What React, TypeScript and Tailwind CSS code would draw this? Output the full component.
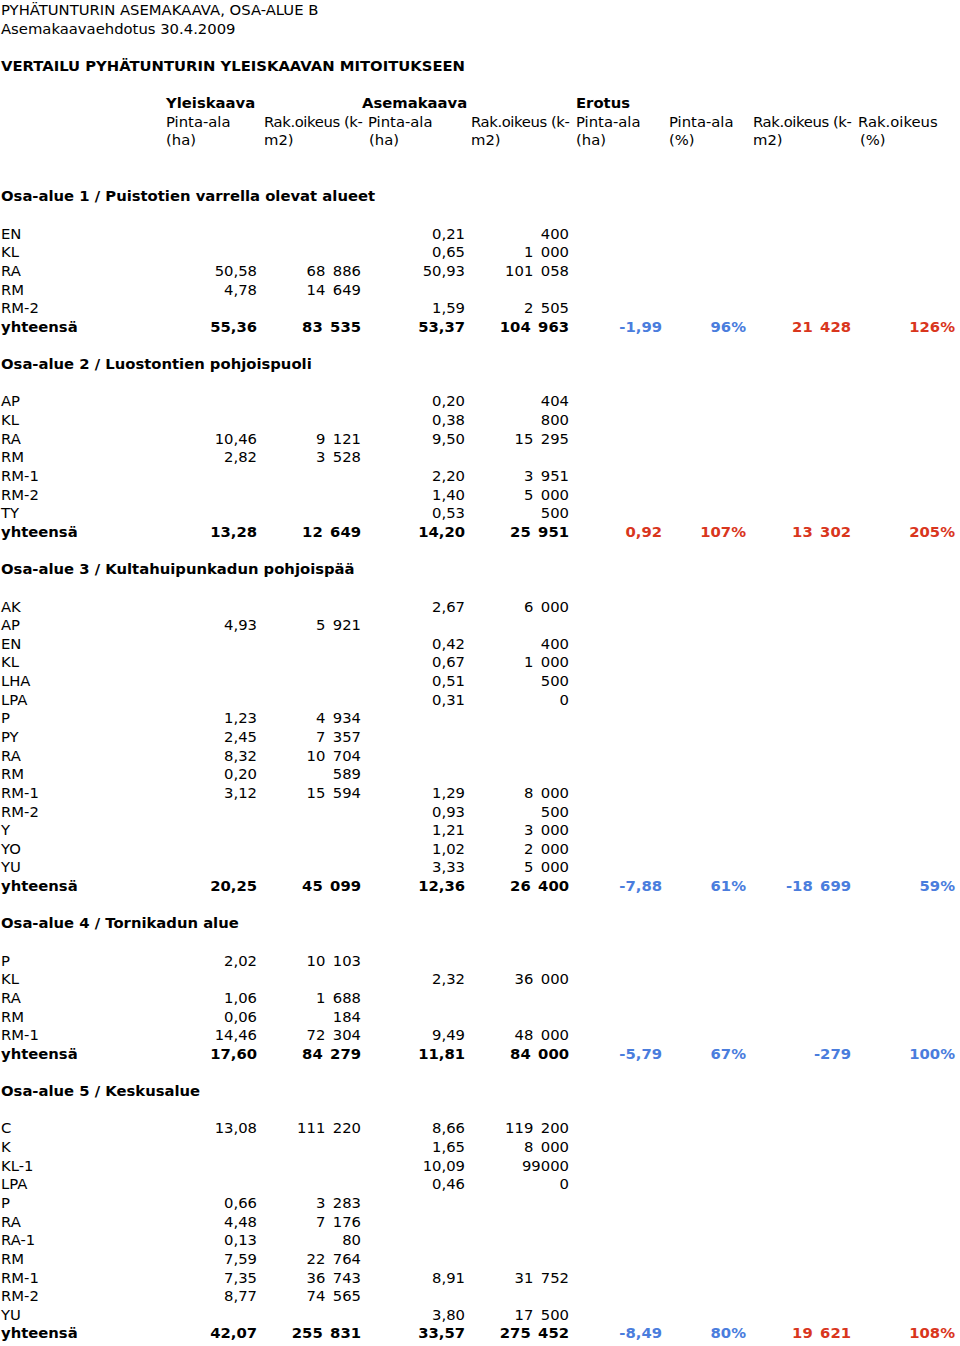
import React from "react";

type Tone = "blue" | "red";

interface ISection {
  title: string;
  rows: string[][];
  total: string[];
  diff: string[];
  tones: Tone[];
}

const sections: ISection[] = [
  {
    title: "Osa-alue 1 / Puistotien varrella olevat alueet",
    rows: [
      ["EN", "", "", "0,21", "400"],
      ["KL", "", "", "0,65", "1 000"],
      ["RA", "50,58", "68 886", "50,93", "101 058"],
      ["RM", "4,78", "14 649", "", ""],
      ["RM-2", "", "", "1,59", "2 505"],
    ],
    total: ["55,36", "83 535", "53,37", "104 963"],
    diff: ["-1,99", "96%", "21 428", "126%"],
    tones: ["blue", "blue", "red", "red"],
  },
  {
    title: "Osa-alue 2 / Luostontien pohjoispuoli",
    rows: [
      ["AP", "", "", "0,20", "404"],
      ["KL", "", "", "0,38", "800"],
      ["RA", "10,46", "9 121", "9,50", "15 295"],
      ["RM", "2,82", "3 528", "", ""],
      ["RM-1", "", "", "2,20", "3 951"],
      ["RM-2", "", "", "1,40", "5 000"],
      ["TY", "", "", "0,53", "500"],
    ],
    total: ["13,28", "12 649", "14,20", "25 951"],
    diff: ["0,92", "107%", "13 302", "205%"],
    tones: ["red", "red", "red", "red"],
  },
  {
    title: "Osa-alue 3 / Kultahuipunkadun pohjoispää",
    rows: [
      ["AK", "", "", "2,67", "6 000"],
      ["AP", "4,93", "5 921", "", ""],
      ["EN", "", "", "0,42", "400"],
      ["KL", "", "", "0,67", "1 000"],
      ["LHA", "", "", "0,51", "500"],
      ["LPA", "", "", "0,31", "0"],
      ["P", "1,23", "4 934", "", ""],
      ["PY", "2,45", "7 357", "", ""],
      ["RA", "8,32", "10 704", "", ""],
      ["RM", "0,20", "589", "", ""],
      ["RM-1", "3,12", "15 594", "1,29", "8 000"],
      ["RM-2", "", "", "0,93", "500"],
      ["Y", "", "", "1,21", "3 000"],
      ["YO", "", "", "1,02", "2 000"],
      ["YU", "", "", "3,33", "5 000"],
    ],
    total: ["20,25", "45 099", "12,36", "26 400"],
    diff: ["-7,88", "61%", "-18 699", "59%"],
    tones: ["blue", "blue", "blue", "blue"],
  },
  {
    title: "Osa-alue 4 / Tornikadun alue",
    rows: [
      ["P", "2,02", "10 103", "", ""],
      ["KL", "", "", "2,32", "36 000"],
      ["RA", "1,06", "1 688", "", ""],
      ["RM", "0,06", "184", "", ""],
      ["RM-1", "14,46", "72 304", "9,49", "48 000"],
    ],
    total: ["17,60", "84 279", "11,81", "84 000"],
    diff: ["-5,79", "67%", "-279", "100%"],
    tones: ["blue", "blue", "blue", "blue"],
  },
  {
    title: "Osa-alue 5 / Keskusalue",
    rows: [
      ["C", "13,08", "111 220", "8,66", "119 200"],
      ["K", "", "", "1,65", "8 000"],
      ["KL-1", "", "", "10,09", "99000"],
      ["LPA", "", "", "0,46", "0"],
      ["P", "0,66", "3 283", "", ""],
      ["RA", "4,48", "7 176", "", ""],
      ["RA-1", "0,13", "80", "", ""],
      ["RM", "7,59", "22 764", "", ""],
      ["RM-1", "7,35", "36 743", "8,91", "31 752"],
      ["RM-2", "8,77", "74 565", "", ""],
      ["YU", "", "", "3,80", "17 500"],
    ],
    total: ["42,07", "255 831", "33,57", "275 452"],
    diff: ["-8,49", "80%", "19 621", "108%"],
    tones: ["blue", "blue", "red", "red"],
  },
];

const grid =
  "grid h-[18.65px] grid-cols-[165px_97px_104px_104px_104px_93px_84px_105px_104px] items-center leading-[18.65px] whitespace-nowrap";

// thousands separator a bit wider than a normal space, as in the sheet
const num = (v: string) => v.replace(/ /g, "\u2002");

function Line({ children, bold }: { children?: React.ReactNode; bold?: boolean }) {
  return (
    <div className={`h-[18.65px] pl-[1px] leading-[18.65px] whitespace-nowrap ${bold ? "font-bold" : ""}`}>
      {children}
    </div>
  );
}

function DataRow({ cells, bold, diff, tones }: { cells: string[]; bold?: boolean; diff?: string[]; tones?: Tone[] }) {
  return (
    <div className={`${grid} ${bold ? "font-bold" : ""}`}>
      <div className="pl-[1px]">{cells[0]}</div>
      {cells.slice(1).map((c, i) => (
        <div key={i} className="pr-[5px] text-right">
          {num(c)}
        </div>
      ))}
      {[0, 1, 2, 3].map((i) => (
        <div
          key={`d${i}`}
          className={`pr-[5px] text-right ${tones?.[i] === "red" ? "text-[#d9361d]" : "text-[#4a7ddd]"}`}
        >
          {diff ? num(diff[i]) : ""}
        </div>
      ))}
    </div>
  );
}

export default function App() {
  return (
    <div className="w-[960px] bg-white text-[14.8px] text-black [font-family:'DejaVu_Sans',Verdana,sans-serif]">
      <div className="mt-[1px]">
        <Line>PYHÄTUNTURIN ASEMAKAAVA, OSA-ALUE B</Line>
        <Line>Asemakaavaehdotus 30.4.2009</Line>
        <Line />
        <Line bold>VERTAILU PYHÄTUNTURIN YLEISKAAVAN MITOITUKSEEN</Line>
        <Line />

        <div className={`${grid} font-bold`}>
          <div />
          <div className="pl-[1px]">Yleiskaava</div>
          <div />
          <div className="-ml-[4px]">Asemakaava</div>
          <div />
          <div className="pl-[2px]">Erotus</div>
        </div>
        <div className={grid}>
          <div />
          <div className="pl-[1px]">Pinta-ala</div>
          <div className="pl-[2px] tracking-[-0.4px]">Rak.oikeus (k-</div>
          <div className="pl-[2px]">Pinta-ala</div>
          <div className="pl-[1px] tracking-[-0.4px]">Rak.oikeus (k-</div>
          <div className="pl-[2px]">Pinta-ala</div>
          <div className="pl-[2px]">Pinta-ala</div>
          <div className="pl-[2px] tracking-[-0.4px]">Rak.oikeus (k-</div>
          <div className="pl-[2px]">Rak.oikeus</div>
        </div>
        <div className={grid}>
          <div />
          <div className="pl-[1px]">(ha)</div>
          <div className="pl-[2px]">m2)</div>
          <div className="pl-[3px]">(ha)</div>
          <div className="pl-[1px]">m2)</div>
          <div className="pl-[2px]">(ha)</div>
          <div className="pl-[2px]">(%)</div>
          <div className="pl-[2px]">m2)</div>
          <div className="pl-[4px]">(%)</div>
        </div>
        <Line />
        <Line />

        {sections.map((s) => (
          <div key={s.title}>
            <Line bold>{s.title}</Line>
            <Line />
            {s.rows.map((r, i) => (
              <DataRow key={i} cells={r} />
            ))}
            <DataRow cells={["yhteensä", ...s.total]} bold diff={s.diff} tones={s.tones} />
            <Line />
          </div>
        ))}
      </div>
    </div>
  );
}
